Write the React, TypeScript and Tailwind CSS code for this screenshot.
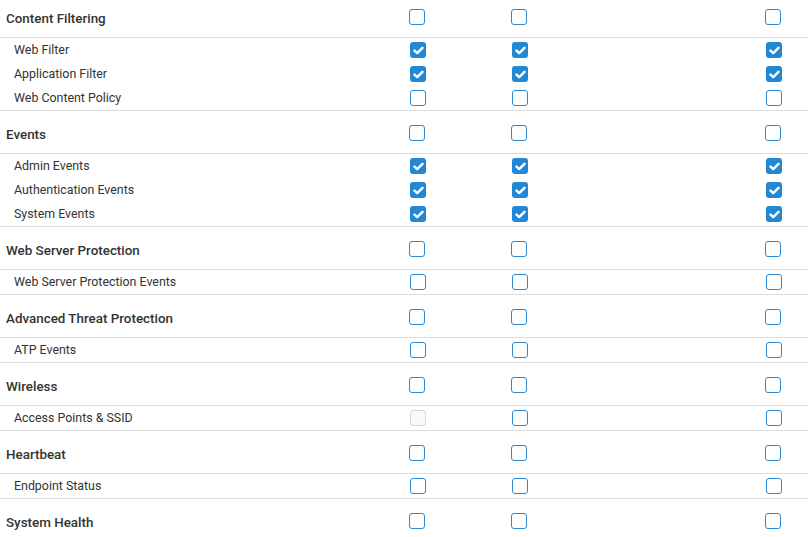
import React from "react";

type CheckState = "on" | "off" | "disabled";
type Sub = { label: string; checks: [CheckState, CheckState, CheckState] };

interface Section {
  title: string;
  items: Sub[];
}

const sections: Section[] = [
  {
    title: "Content Filtering",
    items: [
      { label: "Web Filter", checks: ["on", "on", "on"] },
      { label: "Application Filter", checks: ["on", "on", "on"] },
      { label: "Web Content Policy", checks: ["off", "off", "off"] },
    ],
  },
  {
    title: "Events",
    items: [
      { label: "Admin Events", checks: ["on", "on", "on"] },
      { label: "Authentication Events", checks: ["on", "on", "on"] },
      { label: "System Events", checks: ["on", "on", "on"] },
    ],
  },
  {
    title: "Web Server Protection",
    items: [{ label: "Web Server Protection Events", checks: ["off", "off", "off"] }],
  },
  {
    title: "Advanced Threat Protection",
    items: [{ label: "ATP Events", checks: ["off", "off", "off"] }],
  },
  {
    title: "Wireless",
    items: [{ label: "Access Points & SSID", checks: ["disabled", "off", "off"] }],
  },
  {
    title: "Heartbeat",
    items: [{ label: "Endpoint Status", checks: ["off", "off", "off"] }],
  },
  { title: "System Health", items: [] },
];

const Box = ({ state }: { state: CheckState }) => {
  if (state === "on") {
    return (
      <span className="w-[16px] h-[16px] rounded-[3px] bg-[#2388d3] flex items-center justify-center">
        <svg width="11" height="9" viewBox="0 0 11 9" fill="none">
          <path d="M1.5 4.6 L4.2 7.1 L9.5 1.8" stroke="#fff" strokeWidth="2.4" strokeLinecap="round" strokeLinejoin="round" />
        </svg>
      </span>
    );
  }
  if (state === "disabled") {
    return <span className="w-[16px] h-[16px] rounded-[3px] border-[1.5px] border-[#d6d6d6] bg-[#fafafa]" />;
  }
  return <span className="w-[16px] h-[16px] rounded-[3px] border-[1.5px] border-[#2a8ad6] bg-white" />;
};

const Checks = ({ checks, cls = "" }: { checks: CheckState[]; cls?: string }) => (
  <>
    <div className={`flex ${cls}`}><Box state={checks[0]} /></div>
    <div className={`flex ${cls}`}><Box state={checks[1]} /></div>
    <div className={`flex ${cls}`}><Box state={checks[2]} /></div>
  </>
);

export default function App() {
  return (
    <div className="w-[808px] h-[537px] overflow-hidden bg-white text-[#333]" style={{ fontFamily: "Roboto, 'Liberation Sans', sans-serif" }}>
      <div className="-mt-[5px]">
        {sections.map((s, i) => (
          <div key={s.title}>
            <div className={`grid grid-cols-[409px_102px_254px_1fr] items-center pt-[5px] ${i > 0 ? "h-[43px] border-t border-[#dcdcdc]" : "h-[42px]"}`}>
              <span className="pl-[6px] mt-[2px] text-[13.4px] font-medium">{s.title}</span>
              <Checks checks={["off", "off", "off"]} cls="mb-[4px]" />
            </div>
            {s.items.length > 0 && (
              <div className="border-t border-[#dcdcdc]">
                {s.items.map((it) => (
                  <div key={it.label} className="grid grid-cols-[410px_102px_254px_1fr] items-center h-[24px]">
                    <span className="pl-[14px] text-[12.4px]">{it.label}</span>
                    <Checks checks={it.checks} />
                  </div>
                ))}
              </div>
            )}
          </div>
        ))}
      </div>
    </div>
  );
}
